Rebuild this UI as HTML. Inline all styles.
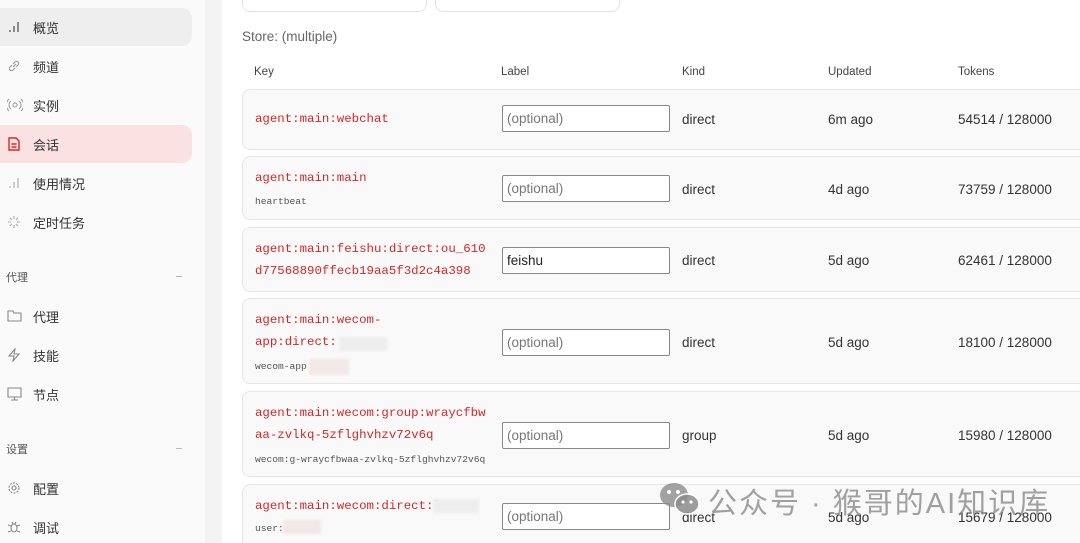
<!DOCTYPE html>
<html><head><meta charset="utf-8"><style>
*{box-sizing:border-box;margin:0;padding:0}
html{width:1080px;height:543px;overflow:hidden}
body{width:1080px;height:543px;overflow:hidden;background:#fff;font-family:"Liberation Sans","Noto Sans CJK SC",sans-serif;position:relative}
.sb{position:absolute;left:0;top:0;width:205px;height:543px;background:#fafafa}
.strip{position:absolute;left:205px;top:0;width:17px;height:543px;background:#f3f3f3}
.it{position:absolute;left:0;width:192px;height:38px;display:flex;align-items:center;font-size:13px;color:#333;border-radius:0 10px 10px 0}
.it svg{position:absolute;left:7px;top:12px}
.it span{position:absolute;left:33px}
.sec{position:absolute;left:6px;font-size:11px;color:#555}
.dash{position:absolute;left:176px;width:6px;height:1px;background:#bbb}
.top{position:absolute;top:-10px;height:22px;border:1px solid #e4e4e4;border-radius:8px;background:#fff}
.store{position:absolute;left:242px;top:29px;font-size:13.5px;color:#666}
.hd{position:absolute;top:66px;font-size:11.5px;color:#444}
.row{position:absolute;left:242px;width:860px;background:#f9f9f9;border:1px solid #e6e6e6;border-radius:8px;overflow:hidden}
.k{position:absolute;left:12px;font-family:"Liberation Mono",monospace;font-size:12.4px;color:#dc2626;line-height:22px}
.sub{position:absolute;left:12px;font-family:"Liberation Mono",monospace;font-size:9.6px;color:#555}
.in{position:absolute;left:259px;width:168px;height:27px;border:1px solid #888;border-radius:2px;background:#fff;font-size:13.5px;color:#777;padding:5px 4px}
.c{position:absolute;font-size:13.5px;color:#333}
.blur{position:absolute;background:#eee;filter:blur(1px)}
.wm{position:absolute;left:660px;top:480px;font-size:29px;color:rgba(130,130,130,.75);letter-spacing:2px}
</style></head><body>
<div class="sb"></div><div class="strip"></div>
<div class="it" style="top:8px;background:#eeeeee"><svg width="14" height="14"><path d="M3 12v-2M7 12V6M11 12V2" stroke="#555" stroke-width="1.3"/></svg><span>概览</span></div>
<div class="it" style="top:47px"><svg width="14" height="14" fill="none" stroke="#999" stroke-width="1.1"><path d="M6 8l3-3M5 6L3 8a2 2 0 003 3l2-2M9 8l2-2a2 2 0 00-3-3L6 5"/></svg><span>频道</span></div>
<div class="it" style="top:86px"><svg width="16" height="14" fill="none" stroke="#999" stroke-width="1"><circle cx="8" cy="7" r="2"/><path d="M4 3a5 5 0 000 8M12 3a5 5 0 010 8M2 1a8 8 0 000 12M14 1a8 8 0 010 12"/></svg><span>实例</span></div>
<div class="it" style="top:125px;background:#fae2e2"><svg width="14" height="14" fill="none" stroke="#dc2626" stroke-width="1.4"><path d="M2 1h7l3 3v9H2zM4.5 7h5M4.5 10h5"/></svg><span>会话</span></div>
<div class="it" style="top:164px"><svg width="14" height="14"><path d="M3 12v-2M7 12V6M11 12V2" stroke="#aaa" stroke-width="1.1"/></svg><span>使用情况</span></div>
<div class="it" style="top:203px"><svg width="14" height="14" stroke="#aaa" stroke-width="1.1"><path d="M7 1v3M7 10v3M1 7h3M10 7h3M3 3l2 2M9 9l2 2M11 3L9 5M5 9l-2 2"/></svg><span>定时任务</span></div>
<div class="sec" style="top:269px">代理</div><div class="dash" style="top:276px"></div>
<div class="it" style="top:297px"><svg width="15" height="14" fill="none" stroke="#888" stroke-width="1.1"><path d="M1 2h5l1 2h7v8H1z"/></svg><span>代理</span></div>
<div class="it" style="top:336px"><svg width="14" height="14" fill="none" stroke="#888" stroke-width="1.1"><path d="M8 1L2 8h5l-1 5 6-7H7z"/></svg><span>技能</span></div>
<div class="it" style="top:375px"><svg width="15" height="14" fill="none" stroke="#888" stroke-width="1.1"><path d="M1 1h13v9H1zM7.5 10v3M4 13h7"/></svg><span>节点</span></div>
<div class="sec" style="top:441px">设置</div><div class="dash" style="top:448px"></div>
<div class="it" style="top:469px"><svg width="14" height="14" fill="none" stroke="#888" stroke-width="1.1"><circle cx="7" cy="7" r="2"/><circle cx="7" cy="7" r="5" stroke-dasharray="2 1.2"/></svg><span>配置</span></div>
<div class="it" style="top:508px"><svg width="14" height="14" fill="none" stroke="#888" stroke-width="1.1"><ellipse cx="7" cy="8" rx="3" ry="4"/><path d="M1 5l3 1M13 5l-3 1M1 12l3-1M13 12l-3-1M5 2l1 2M9 2L8 4"/></svg><span>调试</span></div>

<div class="top" style="left:242px;width:185px"></div>
<div class="top" style="left:435px;width:185px"></div>
<div class="store">Store: (multiple)</div>
<div class="hd" style="left:254px">Key</div><div class="hd" style="left:501px">Label</div><div class="hd" style="left:682px">Kind</div><div class="hd" style="left:828px">Updated</div><div class="hd" style="left:958px">Tokens</div>

<div class="row" style="top:89px;height:61px"><div class="k" style="top:18px">agent:main:webchat</div><div class="in" style="top:15px">(optional)</div><div class="c" style="left:439px;top:22px">direct</div><div class="c" style="left:585px;top:22px">6m ago</div><div class="c" style="left:715px;top:22px">54514 / 128000</div></div>
<div class="row" style="top:156px;height:64px"><div class="k" style="top:10px">agent:main:main</div><div class="sub" style="top:39px">heartbeat</div><div class="in" style="top:18px">(optional)</div><div class="c" style="left:439px;top:25px">direct</div><div class="c" style="left:585px;top:25px">4d ago</div><div class="c" style="left:715px;top:25px">73759 / 128000</div></div>
<div class="row" style="top:227px;height:65px"><div class="k" style="top:10px">agent:main:feishu:direct:ou_610<br>d77568890ffecb19aa5f3d2c4a398</div><div class="in" style="top:19px;color:#222">feishu</div><div class="c" style="left:439px;top:25px">direct</div><div class="c" style="left:585px;top:25px">5d ago</div><div class="c" style="left:715px;top:25px">62461 / 128000</div></div>
<div class="row" style="top:298px;height:86px"><div class="k" style="top:10px">agent:main:wecom-<br>app:direct:</div><div class="blur" style="left:96px;top:38px;width:48px;height:14px"></div><div class="sub" style="top:62px">wecom-app</div><div class="blur" style="left:66px;top:60px;width:40px;height:16px;background:#f3e8e8"></div><div class="in" style="top:30px">(optional)</div><div class="c" style="left:439px;top:36px">direct</div><div class="c" style="left:585px;top:36px">5d ago</div><div class="c" style="left:715px;top:36px">18100 / 128000</div></div>
<div class="row" style="top:391px;height:86px"><div class="k" style="top:10px">agent:main:wecom:group:wraycfbw<br>aa-zvlkq-5zflghvhzv72v6q</div><div class="sub" style="top:62px">wecom:g-wraycfbwaa-zvlkq-5zflghvhzv72v6q</div><div class="in" style="top:30px">(optional)</div><div class="c" style="left:439px;top:36px">group</div><div class="c" style="left:585px;top:36px">5d ago</div><div class="c" style="left:715px;top:36px">15980 / 128000</div></div>
<div class="row" style="top:484px;height:80px"><div class="k" style="top:10px">agent:main:wecom:direct:l</div><div class="blur" style="left:190px;top:14px;width:46px;height:14px"></div><div class="sub" style="top:38px">user:</div><div class="blur" style="left:40px;top:35px;width:38px;height:14px;background:#f3e8e8"></div><div class="in" style="top:18px">(optional)</div><div class="c" style="left:439px;top:25px">direct</div><div class="c" style="left:585px;top:25px">5d ago</div><div class="c" style="left:715px;top:25px">15679 / 128000</div></div>

<svg style="position:absolute;left:658px;top:481px" width="44" height="36"><ellipse cx="16" cy="14" rx="14" ry="12" fill="rgba(140,140,140,.8)"/><ellipse cx="29" cy="23" rx="12" ry="10" fill="rgba(140,140,140,.85)" stroke="#fff" stroke-width="1.5"/><circle cx="11" cy="11" r="2" fill="#fff"/><circle cx="20" cy="11" r="2" fill="#fff"/><circle cx="25" cy="21" r="1.6" fill="#fff"/><circle cx="33" cy="21" r="1.6" fill="#fff"/></svg>
<div class="wm" style="left:708px">公众号 · 猴哥的AI知识库</div>
</body></html>
